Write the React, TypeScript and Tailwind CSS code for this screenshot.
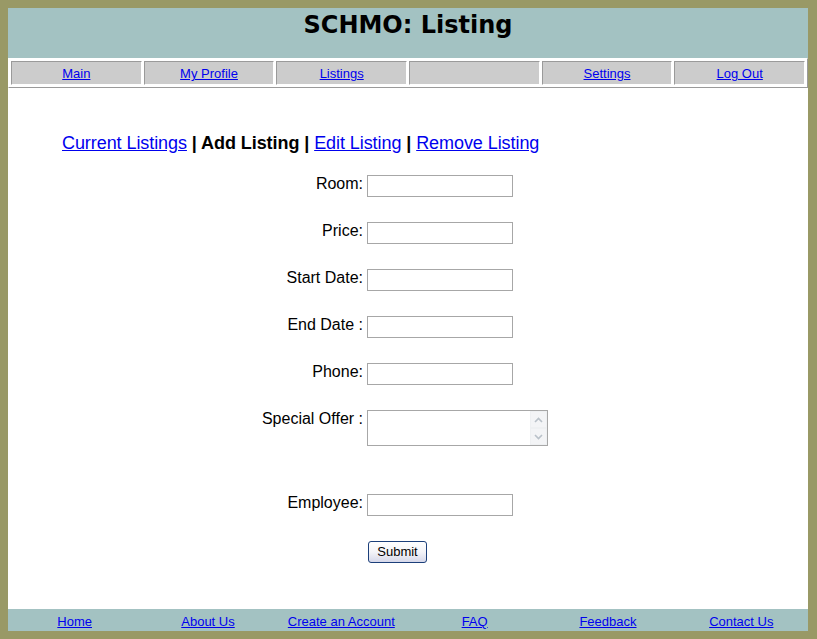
import React from "react";

const navItems = ["Main", "My Profile", "Listings", "", "Settings", "Log Out"];
const footItems = ["Home", "About Us", "Create an Account", "FAQ", "Feedback", "Contact Us"];

function Field({ label }: { label: string }) {
  return (
    <div className="flex items-start">
      <div className="w-[355px] text-right text-[16px] leading-[18px] text-black">{label}</div>
      <input
        type="text"
        className="ml-[4px] h-[22px] w-[146px] border border-[#a7a7a7] bg-white px-1 outline-none"
      />
    </div>
  );
}

function Chevron({ up }: { up?: boolean }) {
  return (
    <svg width="9" height="6" viewBox="0 0 9 6">
      <path
        d={up ? "M1 5 L4.5 1.5 L8 5" : "M1 1 L4.5 4.5 L8 1"}
        fill="none"
        stroke="#b9c1c9"
        strokeWidth="1.6"
      />
    </svg>
  );
}

export default function App() {
  return (
    <div
      className="min-h-screen bg-[#999966] p-2"
      style={{ fontFamily: '"Liberation Sans", Arial, sans-serif' }}
    >
      <div className="w-[800px]">
        {/* Header */}
        <div className="h-[50px] bg-[#a3c2c2] pt-[3px] text-center">
          <h1
            className="text-[24px] font-bold leading-[28px] text-black"
            style={{ fontFamily: '"DejaVu Sans", Verdana, sans-serif' }}
          >
            SCHMO: Listing
          </h1>
        </div>

        {/* Nav */}
        <div className="flex h-[30px] gap-[2px] border border-t-white border-l-white border-b-[#9a9a9a] border-r-[#9a9a9a] bg-white p-[2px]">
          {navItems.map((n, i) => (
            <div
              key={i}
              className="flex-1 border border-t-[#9a9a9a] border-l-[#9a9a9a] border-b-white border-r-white bg-[#cccccc] pt-[1px] text-center text-[13px] leading-[21px]"
            >
              {n && (
                <a href="#" className="text-[#0000ee] underline">
                  {n}
                </a>
              )}
            </div>
          ))}
        </div>

        {/* Main */}
        <div className="h-[521px] bg-white">
          <div className="pl-[54px] pt-[45px] text-[18px] leading-[21px] tracking-[-0.07px] text-black">
            <a href="#" className="text-[#0000ee] underline">Current Listings</a>
            <span className="font-bold"> | Add Listing | </span>
            <a href="#" className="text-[#0000ee] underline">Edit Listing</a>
            <span className="font-bold"> | </span>
            <a href="#" className="text-[#0000ee] underline">Remove Listing</a>
          </div>

          <div className="mt-[21px] flex flex-col gap-[25px]">
            <Field label="Room:" />
            <Field label="Price:" />
            <Field label="Start Date:" />
            <Field label="End Date :" />
            <Field label="Phone:" />
            <div className="flex items-start">
              <div className="w-[355px] text-right text-[16px] leading-[18px] text-black">Special Offer :</div>
              <div className="ml-[4px] flex h-[36px] w-[181px] border border-[#a7a7a7] bg-white">
                <textarea className="h-full flex-1 resize-none border-0 bg-white px-1 outline-none" />
                <div className="flex w-[17px] flex-col">
                  <div className="flex h-[17px] items-center justify-center border border-[#eef0f2] bg-[#f3f4f6]">
                    <Chevron up />
                  </div>
                  <div className="flex h-[17px] items-center justify-center border border-[#eef0f2] bg-[#f3f4f6]">
                    <Chevron />
                  </div>
                </div>
              </div>
            </div>
            <div className="mt-[23px]">
              <Field label="Employee:" />
            </div>
            <div className="flex pl-[360px]">
              <button className="block h-[22px] w-[59px] rounded-[3px] border border-[#1c3f7a] bg-gradient-to-b from-white via-[#f4f4f8] to-[#d6d8ea] text-[13px] leading-[20px] text-black">
                Submit
              </button>
            </div>
          </div>
        </div>

        {/* Footer */}
        <div className="flex h-[22px] bg-[#a3c2c2] pt-[5px]">
          {footItems.map((f) => (
            <div key={f} className="flex-1 text-center text-[13px] leading-[15px]">
              <a href="#" className="text-[#0000ee] underline">
                {f}
              </a>
            </div>
          ))}
        </div>
      </div>
    </div>
  );
}
